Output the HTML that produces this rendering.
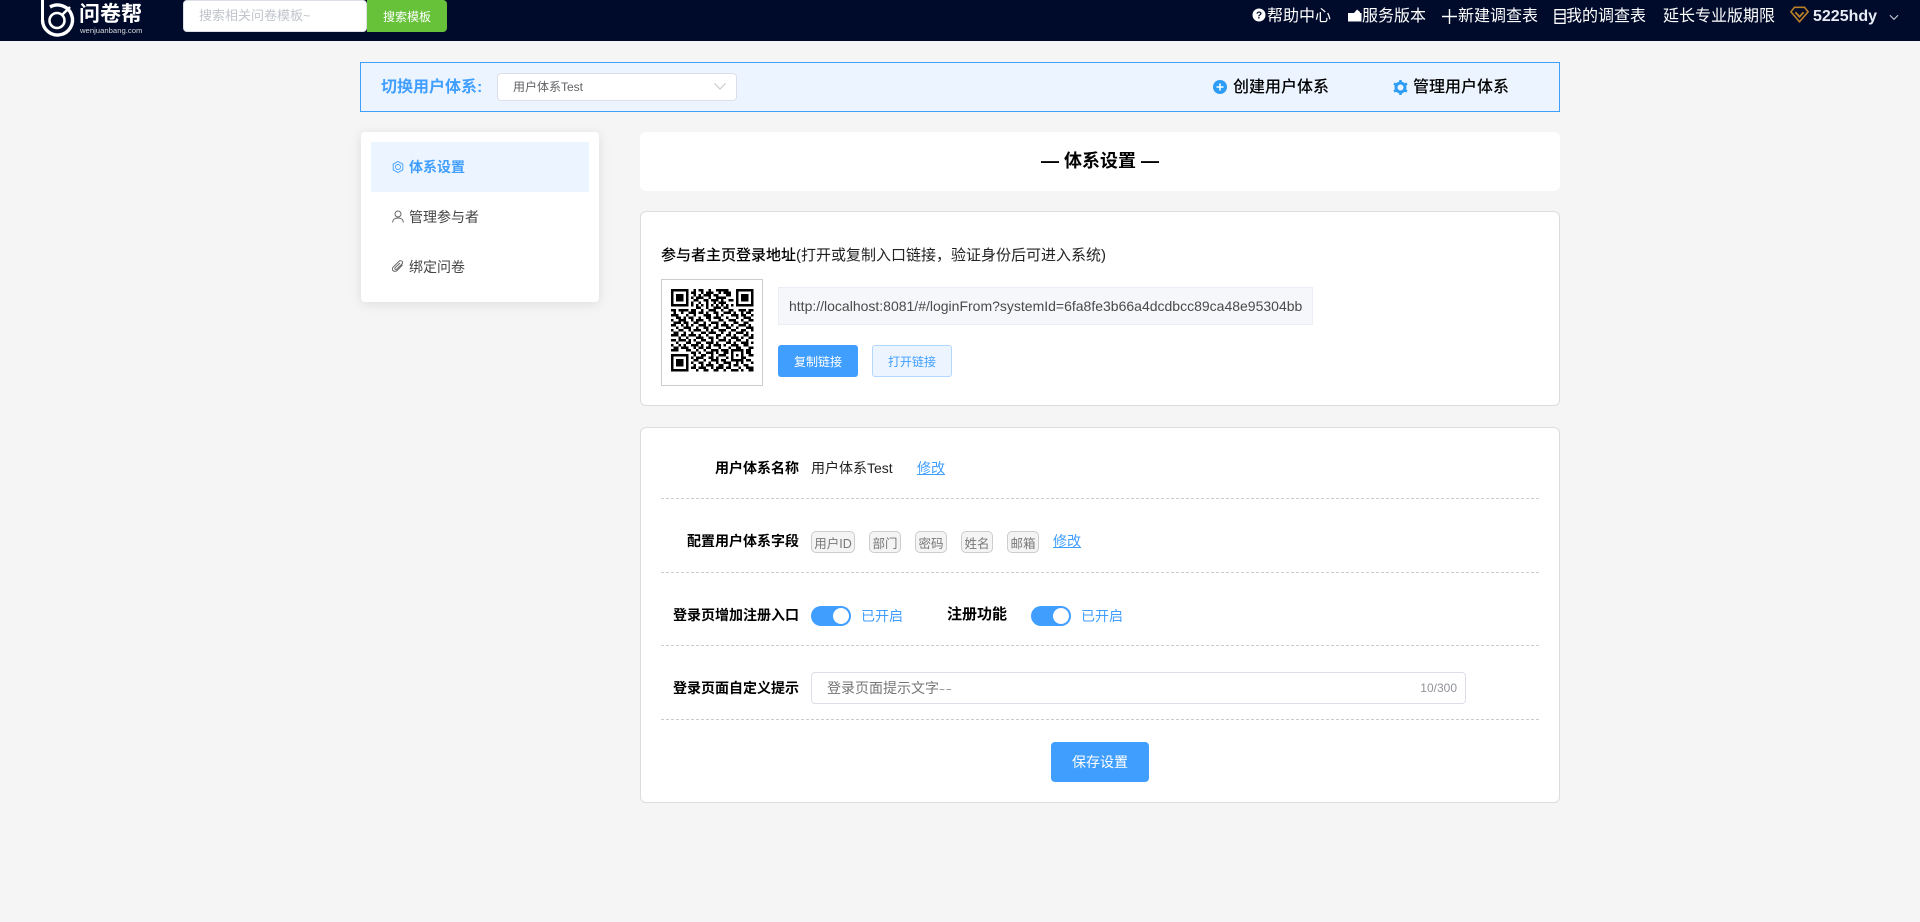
<!DOCTYPE html>
<html lang="zh"><head><meta charset="utf-8"><title>用户体系</title>
<style>
*{box-sizing:border-box;margin:0;padding:0}
html,body{width:1920px;height:922px;overflow:hidden;background:#f5f5f5;font-family:"Liberation Sans","Noto Sans CJK SC",sans-serif;color:#000}
.a{position:absolute;white-space:nowrap}
.c{display:flex;align-items:center;justify-content:center}
.hd{left:0;top:0;width:1920px;height:41px;background:#000b2b}
.nav{color:#fff;font-size:16px;line-height:22px;top:6px}
.card{background:#fff;border-radius:6px}
.bd{border:1px solid #dcdcdc}
.lb{font-size:14px;font-weight:700;line-height:20px;text-align:right;right:1121px;color:#000}
.dash{left:661px;width:878px;border-top:1px dashed #ccc;height:0}
.tag{top:531px;height:22px;background:#f4f4f5;border:1px solid #ccc;border-radius:5px;font-size:12.5px;color:#777}
.lk{font-size:14px;color:#409eff;text-decoration:underline;line-height:20px}
.sw{top:606px;width:40px;height:20px;border-radius:10px;background:#409eff}
.sw i{position:absolute;right:2px;top:2px;width:16px;height:16px;border-radius:50%;background:#fff}
.on{top:606px;font-size:14px;line-height:20px;color:#409eff}
.mi{font-size:14px;line-height:20px;left:409px;color:#444}
</style></head><body>
<div class="a hd"></div>
<svg class="a" style="left:38px;top:0" width="40" height="40" viewBox="38 0 40 40" fill="none" stroke="#fff">
<path d="M42.500 0V20" stroke-width="3"/>
<path d="M42.500 20A15 15 0 1 0 50 7" stroke-width="3.400"/>
<circle cx="57" cy="20.500" r="7.500" stroke-width="2.600"/>
<path d="M62 15L70 7" stroke-width="2.600"/>
</svg>
<div class="a" style="left:79px;top:1px;font-size:21px;line-height:28px;color:#fff;font-weight:700">问卷帮</div>
<div class="a" style="left:80px;top:25px;font-size:7.700px;line-height:11px;color:#d8d8d8">wenjuanbang.com</div>
<div class="a" style="left:183px;top:0;width:184px;height:32px;background:#fff;border:1px solid #dcdfe6;border-radius:4px;font-size:13px;line-height:30px;padding-left:15px;color:#c0c4cc">搜索相关问卷模板~</div>
<div class="a c" style="left:367px;top:0;width:80px;height:32px;background:#67c23a;border-radius:0 4px 4px 0;font-size:12px;color:#fff">搜索模板</div>

<svg class="a" style="left:1252px;top:8px" width="14" height="14" viewBox="0 0 14 14"><circle cx="7" cy="7" r="6.500" fill="#fff"/><text x="7" y="10.500" font-size="10" font-weight="700" text-anchor="middle" fill="#000b2b" font-family="Liberation Sans">?</text></svg>
<div class="a nav" style="left:1267px">帮助中心</div>
<svg class="a" style="left:1347px;top:9px" width="15" height="13" viewBox="0 0 15 13"><path d="M1 4H7L10 0.500 13 3V4H14.500V12.500H1Z" fill="#fff"/></svg>
<div class="a nav" style="left:1362px">服务版本</div>
<svg class="a" style="left:1442px;top:9px" width="15" height="15" viewBox="0 0 15 15"><path d="M7.500 0V15M0 7.500H15" stroke="#fff" stroke-width="1.400"/></svg>
<div class="a nav" style="left:1458px">新建调查表</div>
<svg class="a" style="left:1554px;top:9px" width="12" height="15" viewBox="0 0 12 15" fill="none" stroke="#fff" stroke-width="1.300"><path d="M1 .7H11V14.300H1ZM1 5.200H11M1 9.700H11"/></svg>
<div class="a nav" style="left:1566px">我的调查表</div>
<div class="a nav" style="left:1663px">延长专业版期限</div>
<svg class="a" style="left:1790px;top:6px" width="19" height="17" viewBox="0 0 21 18" fill="none" stroke="#b97f28" stroke-width="1.800"><path d="M5 1H16L20 6 10.500 17 1 6Z"/><path d="M6 6.500L10.500 11.500 15 6.500" stroke-width="2"/></svg>
<div class="a" style="left:1813px;top:6px;font-size:16px;font-weight:700;line-height:22px;color:#e8ecf4">5225hdy</div>
<svg class="a" style="left:1889px;top:14px" width="10" height="7" viewBox="0 0 11 7" fill="none" stroke="#c8ccd6" stroke-width="1.200"><path d="M1 1L5.500 5.500 10 1"/></svg>

<div class="a" style="left:360px;top:62px;width:1200px;height:50px;background:#ecf5ff;border:1px solid #409eff"></div>
<div class="a" style="left:381px;top:76px;font-size:16px;line-height:23px;font-weight:700;color:#409eff">切换用户体系:</div>
<div class="a" style="left:497px;top:73px;width:240px;height:28px;background:#fff;border:1px solid #dcdfe6;border-radius:4px;font-size:12px;line-height:26px;padding-left:15px;color:#606266">用户体系Test</div>
<svg class="a" style="left:714px;top:83px" width="12" height="7" viewBox="0 0 12 7" fill="none" stroke="#c0c4cc" stroke-width="1"><path d="M.5 .5L6 6 11.500 .5"/></svg>
<svg class="a" style="left:1213px;top:80px" width="14" height="14" viewBox="0 0 14 14"><circle cx="7" cy="7" r="7" fill="#2d9cf5"/><path d="M7 3.500V10.500M3.500 7H10.500" stroke="#fff" stroke-width="1.500"/></svg>
<div class="a" style="left:1233px;top:76px;font-size:16px;line-height:23px;font-weight:500">创建用户体系</div>
<svg class="a" style="left:1393px;top:80px" width="15" height="15" viewBox="0 0 15 15" fill="none" stroke="#2d9cf5"><circle cx="7.500" cy="7.500" r="4.500" stroke-width="3"/><path d="M7.500 0V2M7.500 13V15M1 3.500L2.700 4.500M12.300 10.500L14 11.500M1 11.500L2.700 10.500M12.300 4.500L14 3.500" stroke-width="2.500"/></svg>
<div class="a" style="left:1413px;top:76px;font-size:16px;line-height:23px;font-weight:500">管理用户体系</div>

<div class="a" style="left:361px;top:132px;width:238px;height:170px;background:#fff;border-radius:4px;box-shadow:0 2px 12px rgba(0,0,0,.1)"></div>
<div class="a" style="left:371px;top:142px;width:218px;height:50px;background:#ecf5ff"></div>
<svg class="a" style="left:392px;top:161px" width="12" height="12" viewBox="0 0 12 12" fill="none" stroke="#409eff"><circle cx="6" cy="6" r="2.500" stroke-width=".9"/><path d="M6 .5L10.800 3.200V8.800L6 11.500 1.200 8.800V3.200Z" stroke-width=".9"/></svg>
<div class="a mi" style="top:157px;color:#409eff;font-weight:700">体系设置</div>
<svg class="a" style="left:392px;top:210px" width="12" height="13" viewBox="0 0 12 13" fill="none" stroke="#666" stroke-width="1"><circle cx="6" cy="4" r="3"/><path d="M.7 12.500C.7 9.500 3 8 6 8S11.300 9.500 11.300 12.500"/></svg>
<div class="a mi" style="top:207px">管理参与者</div>
<svg class="a" style="left:392px;top:260px" width="12" height="12" viewBox="0 0 12 12" fill="none" stroke="#666" stroke-width="1"><path d="M10.500 5L5 10.500C3.800 11.700 1.900 11.500 1 10.500S.2 8 1.300 7L7 1.300C7.800 .5 9.200 .5 10 1.300S10.800 3.200 10 4L4.700 9.200C4.200 9.700 3.500 9.600 3.100 9.200S2.700 8.200 3.200 7.700L8 3"/></svg>
<div class="a mi" style="top:257px">绑定问卷</div>

<div class="a card" style="left:640px;top:132px;width:920px;height:59px"></div>
<div class="a" style="left:640px;top:149px;width:920px;text-align:center;font-size:18px;line-height:25px;font-weight:700">— 体系设置 —</div>

<div class="a card bd" style="left:640px;top:211px;width:920px;height:195px"></div>
<div class="a" style="left:661px;top:245px;font-size:15px;line-height:22px;color:#222"><b style="font-weight:500;color:#000">参与者主页登录地址</b>(打开或复制入口链接&#65292;验证身份后可进入系统)</div>
<div class="a" style="left:661px;top:279px;width:102px;height:107px;border:1px solid #ccc;background:#fff"></div>
<svg class="a" style="left:671px;top:289px" width="82.500" height="82.500" viewBox="0 0 33 33" fill="none" stroke="#000" stroke-width="1">
<path d="M.5 .5h6v6h-6z"/>
<path d="M26.500 .5h6v6h-6z"/>
<path d="M.5 26.500h6v6h-6z"/>
<rect x="2" y="2" width="3" height="3" fill="#000" stroke="none"/><rect x="28" y="2" width="3" height="3" fill="#000" stroke="none"/><rect x="2" y="28" width="3" height="3" fill="#000" stroke="none"/>
<path d="M9 .5h1M11 .5h2M15 .5h1M18 .5h5M8 1.500h2M12 1.500h1M14 1.500h3M19 1.500h1M21 1.500h3M9 2.500h1M11 2.500h1M13 2.500h3M17 2.500h2M22 2.500h2M8 3.500h1M10 3.500h3M15 3.500h1M18 3.500h4M9 4.500h2M13 4.500h2M16 4.500h3M20 4.500h1M23 4.500h2M8 5.500h1M11 5.500h1M14 5.500h1M17 5.500h1M19 5.500h3M8 6.500h1M10 6.500h1M12 6.500h1M14 6.500h1M16 6.500h1M18 6.500h1M20 6.500h1M22 6.500h1M24 6.500h1M10 7.500h2M14 7.500h1M17 7.500h3M21 7.500h2M0 8.500h2M3 8.500h4M8 8.500h2M12 8.500h1M15 8.500h3M20 8.500h1M23 8.500h2M27 8.500h3M31 8.500h2M1 9.500h1M4 9.500h1M7 9.500h3M11 9.500h2M14 9.500h1M17 9.500h2M21 9.500h3M25 9.500h1M28 9.500h1M30 9.500h2M0 10.500h3M6 10.500h1M9 10.500h1M13 10.500h3M18 10.500h1M20 10.500h1M24 10.500h3M28 10.500h2M32 10.500h1M2 11.500h2M5 11.500h1M7 11.500h2M11 11.500h1M14 11.500h2M17 11.500h3M22 11.500h1M26 11.500h1M29 11.500h3M0 12.500h1M3 12.500h3M8 12.500h1M10 12.500h3M15 12.500h1M19 12.500h2M23 12.500h3M28 12.500h1M31 12.500h2M1 13.500h3M5 13.500h2M9 13.500h2M13 13.500h1M16 13.500h3M21 13.500h1M25 13.500h2M29 13.500h2M0 14.500h2M4 14.500h1M6 14.500h1M8 14.500h1M11 14.500h3M15 14.500h1M18 14.500h1M20 14.500h3M24 14.500h1M27 14.500h3M31 14.500h1M2 15.500h1M5 15.500h3M10 15.500h1M13 15.500h2M17 15.500h2M22 15.500h2M26 15.500h1M30 15.500h3M0 16.500h1M3 16.500h2M7 16.500h1M9 16.500h3M14 16.500h1M16 16.500h1M19 16.500h3M24 16.500h2M28 16.500h2M32 16.500h1M1 17.500h2M5 17.500h1M8 17.500h1M12 17.500h2M15 17.500h3M20 17.500h1M23 17.500h1M26 17.500h3M30 17.500h1M0 18.500h3M4 18.500h2M7 18.500h3M11 18.500h1M14 18.500h1M18 18.500h2M22 18.500h2M25 18.500h1M29 18.500h2M32 18.500h1M3 19.500h1M6 19.500h1M10 19.500h3M15 19.500h2M18 19.500h1M21 19.500h1M24 19.500h3M28 19.500h1M31 19.500h2M0 20.500h2M3 20.500h3M7 20.500h1M9 20.500h1M12 20.500h2M16 20.500h1M19 20.500h3M23 20.500h1M26 20.500h2M30 20.500h1M2 21.500h1M6 21.500h2M10 21.500h2M14 21.500h3M18 21.500h1M22 21.500h2M25 21.500h1M28 21.500h3M32 21.500h1M0 22.500h1M3 22.500h1M5 22.500h1M8 22.500h3M12 22.500h1M15 22.500h1M17 22.500h3M21 22.500h1M24 22.500h3M29 22.500h2M1 23.500h2M4 23.500h3M9 23.500h1M11 23.500h2M14 23.500h2M19 23.500h1M23 23.500h1M26 23.500h2M31 23.500h2M0 24.500h3M6 24.500h2M10 24.500h1M13 24.500h1M16 24.500h3M20 24.500h3M24 24.500h5M30 24.500h2M8 25.500h2M11 25.500h1M14 25.500h3M18 25.500h1M21 25.500h2M24 25.500h1M28 25.500h1M30 25.500h2M9 26.500h1M12 26.500h2M16 26.500h1M19 26.500h3M24 26.500h1M26 26.500h1M28 26.500h1M31 26.500h2M8 27.500h1M10 27.500h3M15 27.500h2M18 27.500h1M22 27.500h1M24 27.500h1M28 27.500h2M9 28.500h2M13 28.500h1M16 28.500h3M20 28.500h2M24 28.500h5M30 28.500h2M8 29.500h1M11 29.500h2M15 29.500h1M18 29.500h1M21 29.500h3M26 29.500h1M28 29.500h1M32 29.500h1M9 30.500h1M12 30.500h1M14 30.500h3M19 30.500h2M23 30.500h1M25 30.500h2M29 30.500h2M8 31.500h2M11 31.500h3M16 31.500h1M18 31.500h3M22 31.500h2M27 31.500h1M30 31.500h3M10 32.500h1M13 32.500h2M17 32.500h2M21 32.500h1M24 32.500h3M28 32.500h1M31 32.500h2"/>
</svg>
<div class="a" style="left:778px;top:287px;width:535px;height:38px;background:#f5f7fa;border:1px solid #ebeef5;font-size:14px;line-height:36px;padding-left:10px;color:#4a4a4a">http://localhost:8081/#/loginFrom?systemId=6fa8fe3b66a4dcdbcc89ca48e95304bb</div>
<div class="a c" style="left:778px;top:345px;width:80px;height:32px;background:#409eff;border-radius:3px;font-size:12px;color:#fff">复制链接</div>
<div class="a c" style="left:872px;top:345px;width:80px;height:32px;background:#ecf5ff;border:1px solid #b3d8ff;border-radius:3px;font-size:12px;color:#409eff">打开链接</div>

<div class="a card bd" style="left:640px;top:427px;width:920px;height:376px"></div>
<div class="a lb" style="top:458px">用户体系名称</div>
<div class="a" style="left:811px;top:458px;font-size:14px;line-height:20px;color:#222">用户体系Test</div>
<div class="a lk" style="left:917px;top:458px">修改</div>
<div class="a dash" style="top:498px"></div>
<div class="a lb" style="top:531px">配置用户体系字段</div>
<div class="a tag c" style="left:811px;width:44px">用户ID</div>
<div class="a tag c" style="left:869px;width:32px">部门</div>
<div class="a tag c" style="left:915px;width:32px">密码</div>
<div class="a tag c" style="left:961px;width:32px">姓名</div>
<div class="a tag c" style="left:1007px;width:32px">邮箱</div>
<div class="a lk" style="left:1053px;top:531px">修改</div>
<div class="a dash" style="top:572px"></div>
<div class="a lb" style="top:605px">登录页增加注册入口</div>
<div class="a sw" style="left:811px"><i></i></div>
<div class="a on" style="left:861px">已开启</div>
<div class="a" style="left:947px;top:604px;font-size:15px;line-height:21px;font-weight:700">注册功能</div>
<div class="a sw" style="left:1031px"><i></i></div>
<div class="a on" style="left:1081px">已开启</div>
<div class="a dash" style="top:645px"></div>
<div class="a lb" style="top:678px">登录页面自定义提示</div>
<div class="a" style="left:811px;top:672px;width:655px;height:32px;background:#fff;border:1px solid #dcdfe6;border-radius:4px;font-size:14px;line-height:30px;padding-left:15px;color:#757575">登录页面提示文字<span style="font-size:10px;letter-spacing:1px">~~</span></div>
<div class="a" style="left:1420px;top:680px;width:37px;text-align:right;font-size:12px;line-height:17px;color:#909399">10/300</div>
<div class="a dash" style="top:719px"></div>
<div class="a c" style="left:1051px;top:742px;width:98px;height:40px;background:#409eff;border-radius:4px;font-size:14px;color:#fff">保存设置</div>
</body></html>
